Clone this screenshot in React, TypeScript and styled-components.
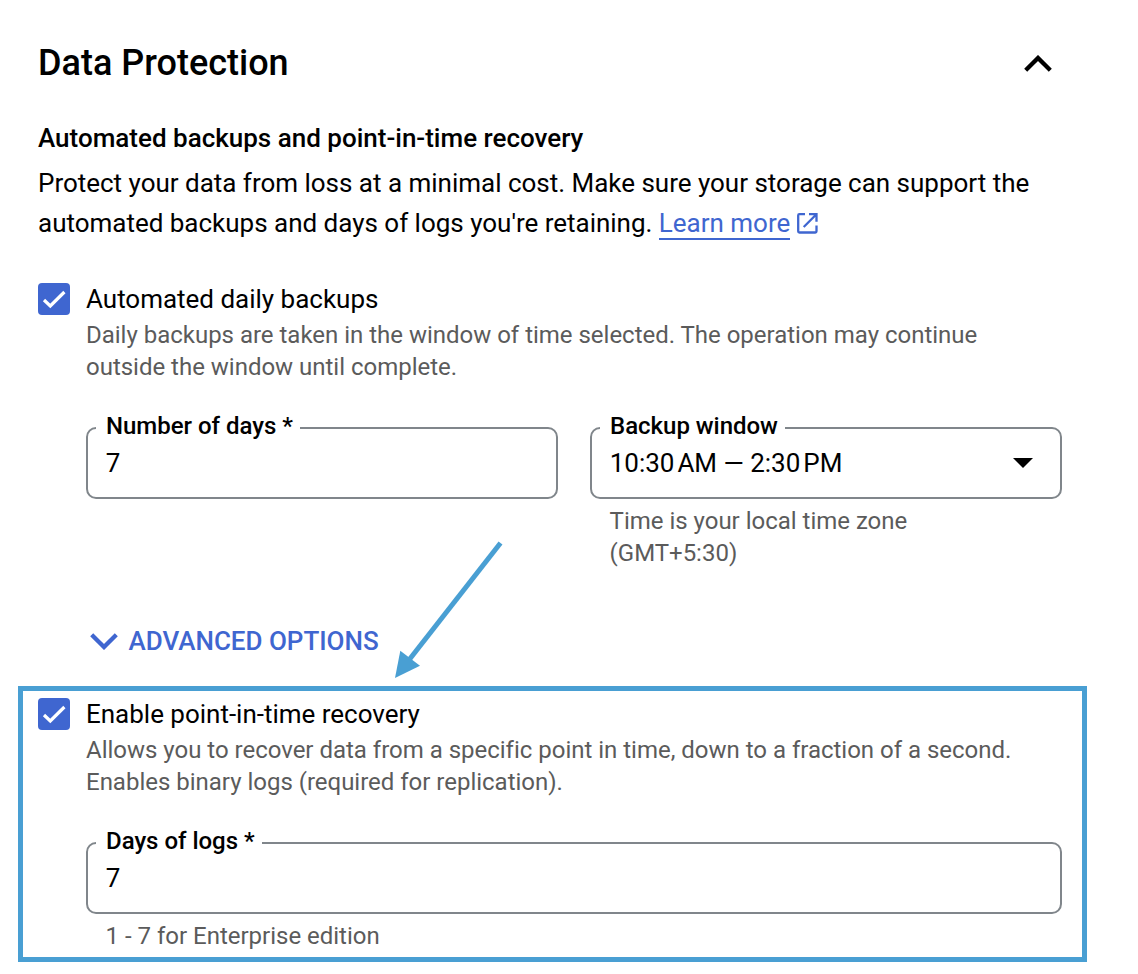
import React from "react";
import styled, { createGlobalStyle } from "styled-components";

const blue = "#3f66d0";
const accent = "#499fd3";

const GlobalStyle = createGlobalStyle`
  * { box-sizing: border-box; }
  body { margin: 0; background: #fff; color: #000; font-family: Roboto, sans-serif; font-size: 26px; letter-spacing: -0.012px; }
`;

const Page = styled.main`
  position: relative;
  width: 1138px;
  height: 974px;
  padding: 39px 51px 0 18px;
  overflow: hidden;
`;
const Content = styled.div`
  padding: 0 25px 0 20px;
`;
const Header = styled.header`
  display: flex;
  align-items: center;
  justify-content: space-between;
  height: 48px;
  padding-right: 10px;
`;
const Title = styled.h1`
  margin: 0;
  font-size: 36px;
  font-weight: 500;
  line-height: 48px;
  letter-spacing: 0;
`;
const Subtitle = styled.h2`
  margin: 35px 0 0;
  font-size: 26px;
  font-weight: 500;
  line-height: 32px;
  letter-spacing: 0;
`;
const Paragraph = styled.p`
  margin: 9px 0 40px;
  line-height: 40px;
  white-space: nowrap;
`;
const Link = styled.a`
  color: ${blue};
  text-decoration: none;
  border-bottom: 2px solid ${blue};
  margin-right: 7px;
`;
const Option = styled.section`
  display: grid;
  grid-template-columns: 32px 1fr;
  column-gap: 16px;
`;
const Checkbox = styled.span`
  width: 32px;
  height: 32px;
  border-radius: 4px;
  background: ${blue};
  svg { display: block; }
`;
const OptionLabel = styled.div`
  line-height: 32px;
`;
const Hint = styled.p<{ $top?: number; $inset?: boolean }>`
  margin: ${(p) => p.$top ?? 4}px 0 0;
  padding-left: ${(p) => (p.$inset ? 19.6 : 0)}px;
  font-size: 24px;
  line-height: 32px;
  color: #5b5b5b;
  white-space: nowrap;
`;
const Fields = styled.div`
  display: flex;
  gap: 32px;
  margin-top: 44px;
`;
const FieldColumn = styled.div`
  flex: 1;
`;
const FieldBox = styled.div`
  position: relative;
  display: flex;
  align-items: center;
  justify-content: space-between;
  height: 72px;
  padding: 0 27px 0 17.7px;
  border: 2px solid #80868b;
  border-radius: 10px;
`;
const FieldLabel = styled.label`
  position: absolute;
  top: -19px;
  left: 8px;
  padding: 0 7.5px 0 10px;
  background: #fff;
  font-size: 24px;
  font-weight: 500;
  line-height: 32px;
  letter-spacing: -0.02px;
  white-space: nowrap;
`;
const Meridiem = styled.span`
  margin-left: 3px;
`;
const Expander = styled.div`
  display: flex;
  align-items: center;
  gap: 10.5px;
  margin: 56px 0 29px 52px;
  height: 32px;
  color: ${blue};
  font-weight: 500;
  line-height: 32px;
`;
const Highlight = styled.div`
  width: 1069px;
  height: 276px;
  border: 5px solid ${accent};
  padding: 7px 20px 0 15px;
`;
const Arrow = styled.svg`
  position: absolute;
  left: 390px;
  top: 536px;
`;
const External = styled.svg`
  vertical-align: -1.5px;
  margin-left: -0.7px;
`;

const Chevron = ({ down }: { down?: boolean }) => (
  <svg width="28" height="17" viewBox="0 0 28 17" fill="none" stroke="currentColor" strokeWidth="4.3">
    <path d={down ? "M1.7 1.7L14 14L26.3 1.7" : "M1.7 15.3L14 3L26.3 15.3"} />
  </svg>
);

const ExternalIcon = () => (
  <External width="21" height="21" viewBox="0 0 21 21" fill="none" stroke={blue} strokeWidth="2.3">
    <path d="M8 1.2H2.4Q1.2 1.2 1.2 2.4V18.3Q1.2 19.5 2.4 19.5H18.3Q19.5 19.5 19.5 18.3V12.5" />
    <path d="M12 1.2H19.5V8.7M19.2 1.5L6.7 14" />
  </External>
);

const Check = () => (
  <Checkbox>
    <svg width="32" height="32" viewBox="0 0 32 32" fill="none" stroke="#fff" strokeWidth="3.2">
      <path d="M6 17L12.3 23L26.4 9" />
    </svg>
  </Checkbox>
);

function Field({ label, children, select }: { label: string; children: React.ReactNode; select?: boolean }) {
  return (
    <FieldBox>
      <FieldLabel>{label}</FieldLabel>
      <span>{children}</span>
      {select && (
        <svg width="20" height="10" viewBox="0 0 20 10">
          <path d="M0 0H20L10 10Z" />
        </svg>
      )}
    </FieldBox>
  );
}

export default function App() {
  return (
    <Page>
      <GlobalStyle />
      <Content>
        <Header>
          <Title>Data Protection</Title>
          <Chevron />
        </Header>
        <Subtitle>Automated backups and point-in-time recovery</Subtitle>
        <Paragraph>
          Protect your data from loss at a minimal cost. Make sure your storage can support the
          <br />
          automated backups and days of logs you're retaining. <Link>Learn more</Link>
          <ExternalIcon />
        </Paragraph>
        <Option>
          <Check />
          <div>
            <OptionLabel>Automated daily backups</OptionLabel>
            <Hint>
              Daily backups are taken in the window of time selected. The operation may continue
              <br />
              outside the window until complete.
            </Hint>
            <Fields>
              <FieldColumn>
                <Field label="Number of days *">7</Field>
              </FieldColumn>
              <FieldColumn>
                <Field label="Backup window" select>
                  10:30<Meridiem>AM</Meridiem> — 2:30<Meridiem>PM</Meridiem>
                </Field>
                <Hint $top={6} $inset>
                  Time is your local time zone
                  <br />
                  (GMT+5:30)
                </Hint>
              </FieldColumn>
            </Fields>
          </div>
        </Option>
        <Expander>
          <Chevron down />
          <span>ADVANCED OPTIONS</span>
        </Expander>
      </Content>
      <Highlight>
        <Option>
          <Check />
          <div>
            <OptionLabel>Enable point-in-time recovery</OptionLabel>
            <Hint>
              Allows you to recover data from a specific point in time, down to a fraction of a second.
              <br />
              Enables binary logs (required for replication).
            </Hint>
            <Fields>
              <FieldColumn>
                <Field label="Days of logs *">7</Field>
                <Hint $top={6} $inset>
                  1 - 7 for Enterprise edition
                </Hint>
              </FieldColumn>
            </Fields>
          </div>
        </Option>
      </Highlight>
      <Arrow width="120" height="150" viewBox="390 536 120 150">
        <path d="M500.5 543L409 660" stroke={accent} strokeWidth="5" />
        <path d="M395 678L400.3 650.8L420 665.8Z" fill={accent} />
      </Arrow>
    </Page>
  );
}
